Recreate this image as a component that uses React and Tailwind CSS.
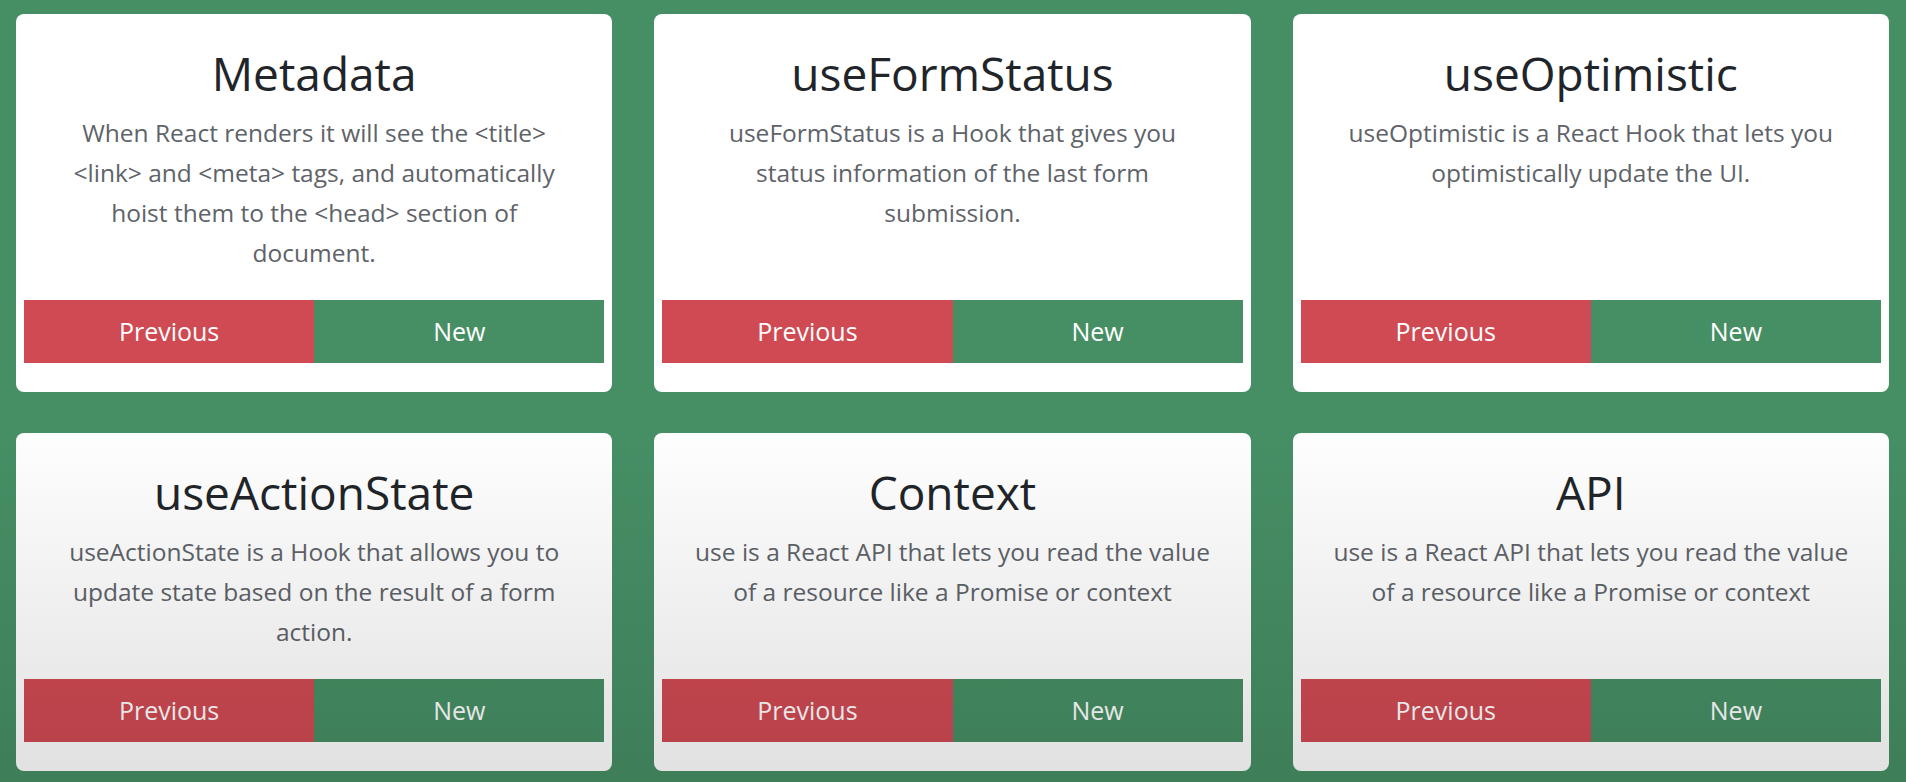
const cards = [
  {
    title: "Metadata",
    lines: [
      "When React renders it will see the <title>",
      "<link> and <meta> tags, and automatically",
      "hoist them to the <head> section of",
      "document.",
    ],
  },
  {
    title: "useFormStatus",
    lines: [
      "useFormStatus is a Hook that gives you",
      "status information of the last form",
      "submission.",
    ],
  },
  {
    title: "useOptimistic",
    lines: [
      "useOptimistic is a React Hook that lets you",
      "optimistically update the UI.",
    ],
  },
  {
    title: "useActionState",
    lines: [
      "useActionState is a Hook that allows you to",
      "update state based on the result of a form",
      "action.",
    ],
  },
  {
    title: "Context",
    lines: [
      "use is a React API that lets you read the value",
      "of a resource like a Promise or context",
    ],
  },
  {
    title: "API",
    lines: [
      "use is a React API that lets you read the value",
      "of a resource like a Promise or context",
    ],
  },
];

function FeatureCard({ title, lines }) {
  return (
    <div className="flex flex-col rounded-lg bg-white px-2 pt-[31px] pb-[29px] text-center">
      <h2 className="text-[46px] leading-[56px] text-[#212529]">{title}</h2>
      <p className="mt-3 text-[24.5px] leading-[40px] text-[#5e6369]">
        {lines.map((line) => (
          <span key={line} className="block">
            {line}
          </span>
        ))}
      </p>
      <div className="mt-auto flex pt-[27px]">
        <button className="h-[63px] flex-1 bg-[#d04a53] text-[25px] font-medium text-white">
          Previous
        </button>
        <button className="h-[63px] flex-1 bg-[#468f64] text-[25px] font-medium text-white">
          New
        </button>
      </div>
    </div>
  );
}

export default function App() {
  return (
    <div className="relative min-h-screen bg-[#468f65] px-4 pt-[14px] pb-3 font-['Open_Sans',sans-serif]">
      <div className="grid grid-cols-3 gap-x-[42px] gap-y-[41px] pr-px">
        {cards.map((card) => (
          <FeatureCard key={card.title} {...card} />
        ))}
      </div>
      {/* darker shading over the lower half, as in the capture */}
      <div className="pointer-events-none absolute inset-x-0 top-[420px] bottom-0 bg-linear-to-b from-transparent to-black/12" />
    </div>
  );
}
